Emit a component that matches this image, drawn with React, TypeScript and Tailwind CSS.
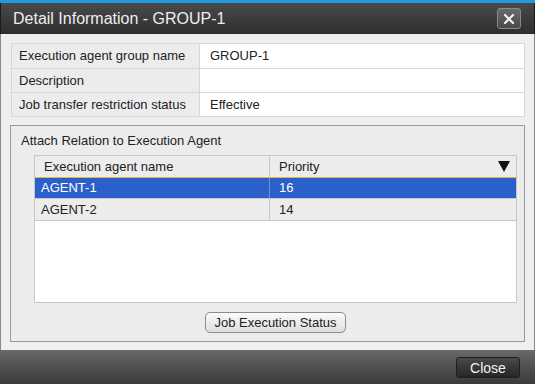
import React from 'react';

const info = [
  { label: 'Execution agent group name', value: 'GROUP-1' },
  { label: 'Description', value: '' },
  { label: 'Job transfer restriction status', value: 'Effective' },
];

const agents = [
  { name: 'AGENT-1', priority: '16', selected: true },
  { name: 'AGENT-2', priority: '14', selected: false },
];

export default function App() {
  return (
    <div className="w-[535px] h-[384px] flex flex-col bg-[#efefef] font-['Liberation_Sans',Arial,sans-serif] text-[13px] text-[#222] overflow-hidden">
      <div className="h-[3px] bg-[#1e9be0]" />
      {/* title bar */}
      <div className="h-[31px] flex items-center justify-between pl-3 pr-[13px] bg-gradient-to-b from-[#4a4a4a] to-[#2e2e2e] border-x border-[#1a1a1a]">
        <span className="text-[16px] text-[#eeeeee]">Detail Information - GROUP-1</span>
        <button className="w-[24px] h-[21px] flex items-center justify-center rounded-[3px] border border-[#8a8a8a] bg-gradient-to-b from-[#6a6a6a] to-[#4a4a4a]">
          <svg width="12" height="12" viewBox="0 0 12 12">
            <path d="M2 2 L10 10 M10 2 L2 10" stroke="#f2f2f2" strokeWidth="2.2" strokeLinecap="round" />
          </svg>
        </button>
      </div>

      {/* body */}
      <div className="flex-1 flex flex-col px-[9px] pt-[9px] pb-[8px] border-x border-[#8a8a8a]">
        <div className="ml-[1px] border border-[#d6d6d6] bg-white">
          {info.map((row, i) => (
            <div key={row.label} className={`flex h-[24px] ${i > 0 ? 'border-t border-[#d6d6d6]' : ''}`}>
              <div className="w-[188px] flex items-center pl-[7px] bg-[#ececec] border-r border-[#d6d6d6]">{row.label}</div>
              <div className="flex-1 flex items-center pl-[10px]">{row.value}</div>
            </div>
          ))}
        </div>

        <div className="mt-[8px] flex-1 flex flex-col border border-[#9a9a9a] bg-[#ececec] pl-[23px] pr-[7px]">
          <div className="-ml-[13px] pt-[5px] h-[29px]">Attach Relation to Execution Agent</div>
          <div className="h-[148px] flex flex-col bg-white border border-[#c8c8c8]">
            <div className="flex h-[22px] bg-[#ececec] border-b border-[#c8c8c8]">
              <div className="w-[235px] flex items-center pl-[9px] border-r border-[#c8c8c8]">Execution agent name</div>
              <div className="flex-1 flex items-center justify-between pl-[9px] pr-[6px]">
                <span>Priority</span>
                <svg width="12" height="11" viewBox="0 0 12 11">
                  <path d="M0 0 H12 L6 11 Z" fill="#111" />
                </svg>
              </div>
            </div>
            {agents.map((a) => (
              <div
                key={a.name}
                className={`flex h-[22px] border-b ${a.selected ? 'bg-[#2b5fcb] text-white border-[#c8c8c8] border-t border-t-[#e0b840] -mt-[1px]' : 'bg-[#ececec] border-[#c8c8c8]'}`}
              >
                <div className={`w-[235px] flex items-center pl-[6px] border-r ${a.selected ? 'border-[#6d8fd6]' : 'border-[#c8c8c8]'}`}>{a.name}</div>
                <div className="flex-1 flex items-center pl-[9px]">{a.priority}</div>
              </div>
            ))}
          </div>
          <div className="flex-1 flex items-center justify-center">
            <button className="h-[21px] px-[8px] rounded-[5px] border border-[#8c8c8c] bg-gradient-to-b from-[#fbfbfb] to-[#dedede] text-[13px] text-[#222]">
              Job Execution Status
            </button>
          </div>
        </div>
      </div>

      {/* footer */}
      <div className="h-[34px] flex items-center justify-end pr-[15px] bg-gradient-to-b from-[#6a6a6a] via-[#505050] to-[#3a3a3a]">
        <button className="w-[64px] h-[21px] rounded-[3px] border border-[#1e1e1e] bg-gradient-to-b from-[#4a4a4a] to-[#262626] text-[14px] text-[#f2f2f2]">
          Close
        </button>
      </div>
    </div>
  );
}
